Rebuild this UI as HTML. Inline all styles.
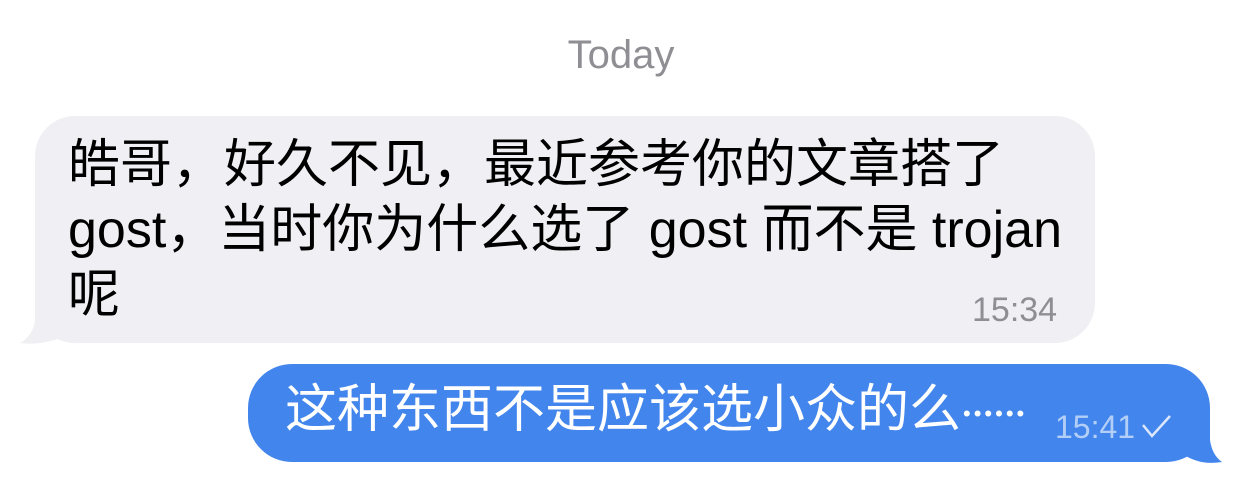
<!DOCTYPE html>
<html><head><meta charset="utf-8"><style>
body{margin:0;width:1242px;height:478px;background:#fff;position:relative;overflow:hidden;font-family:"Liberation Sans","Noto Sans CJK SC",sans-serif;}
.today{position:absolute;top:32px;left:0;width:1242px;text-align:center;font-size:40px;line-height:46px;color:#8e8e93;}
.b{position:absolute;}
.t{position:absolute;font-size:52px;line-height:65px;white-space:nowrap;}
</style></head><body>
<div class="today">Today</div>
<svg class="b" style="left:0;top:0" width="1242" height="478">
<rect x="35" y="116" width="1060" height="227" rx="40" fill="#efeff4"/>
<path d="M35 290 L35 320 Q33 336 20 343 Q45 346 70 334 L70 300 Z" fill="#efeff4"/>
<rect x="248" y="364" width="962" height="98" rx="44" fill="#4285ec"/>
<path d="M1210 410 L1210 440 Q1212 455 1222 462 Q1198 466 1180 452 L1180 420 Z" fill="#4285ec"/>
<path d="M1143 425 L1152 436 L1170 416" stroke="#dbe7fc" stroke-width="2.5" fill="none"/>
</svg>
<div class="t" style="left:68px;top:133px;color:#000">皓哥，好久不见，最近参考你的文章搭了<br>gost，当时你为什么选了 gost 而不是 trojan<br>呢</div>
<div class="t" style="left:972px;top:290px;font-size:34px;line-height:40px;color:#8e8e93">15:34</div>
<div class="t" style="left:285px;top:378px;color:#fff">这种东西不是应该选小众的么<span style="font-size:22px;letter-spacing:3px;vertical-align:middle;margin-left:2px">••••••</span></div>
<div class="t" style="left:1055px;top:408px;font-size:32px;line-height:38px;color:#b4cff7">15:41</div>
</body></html>
